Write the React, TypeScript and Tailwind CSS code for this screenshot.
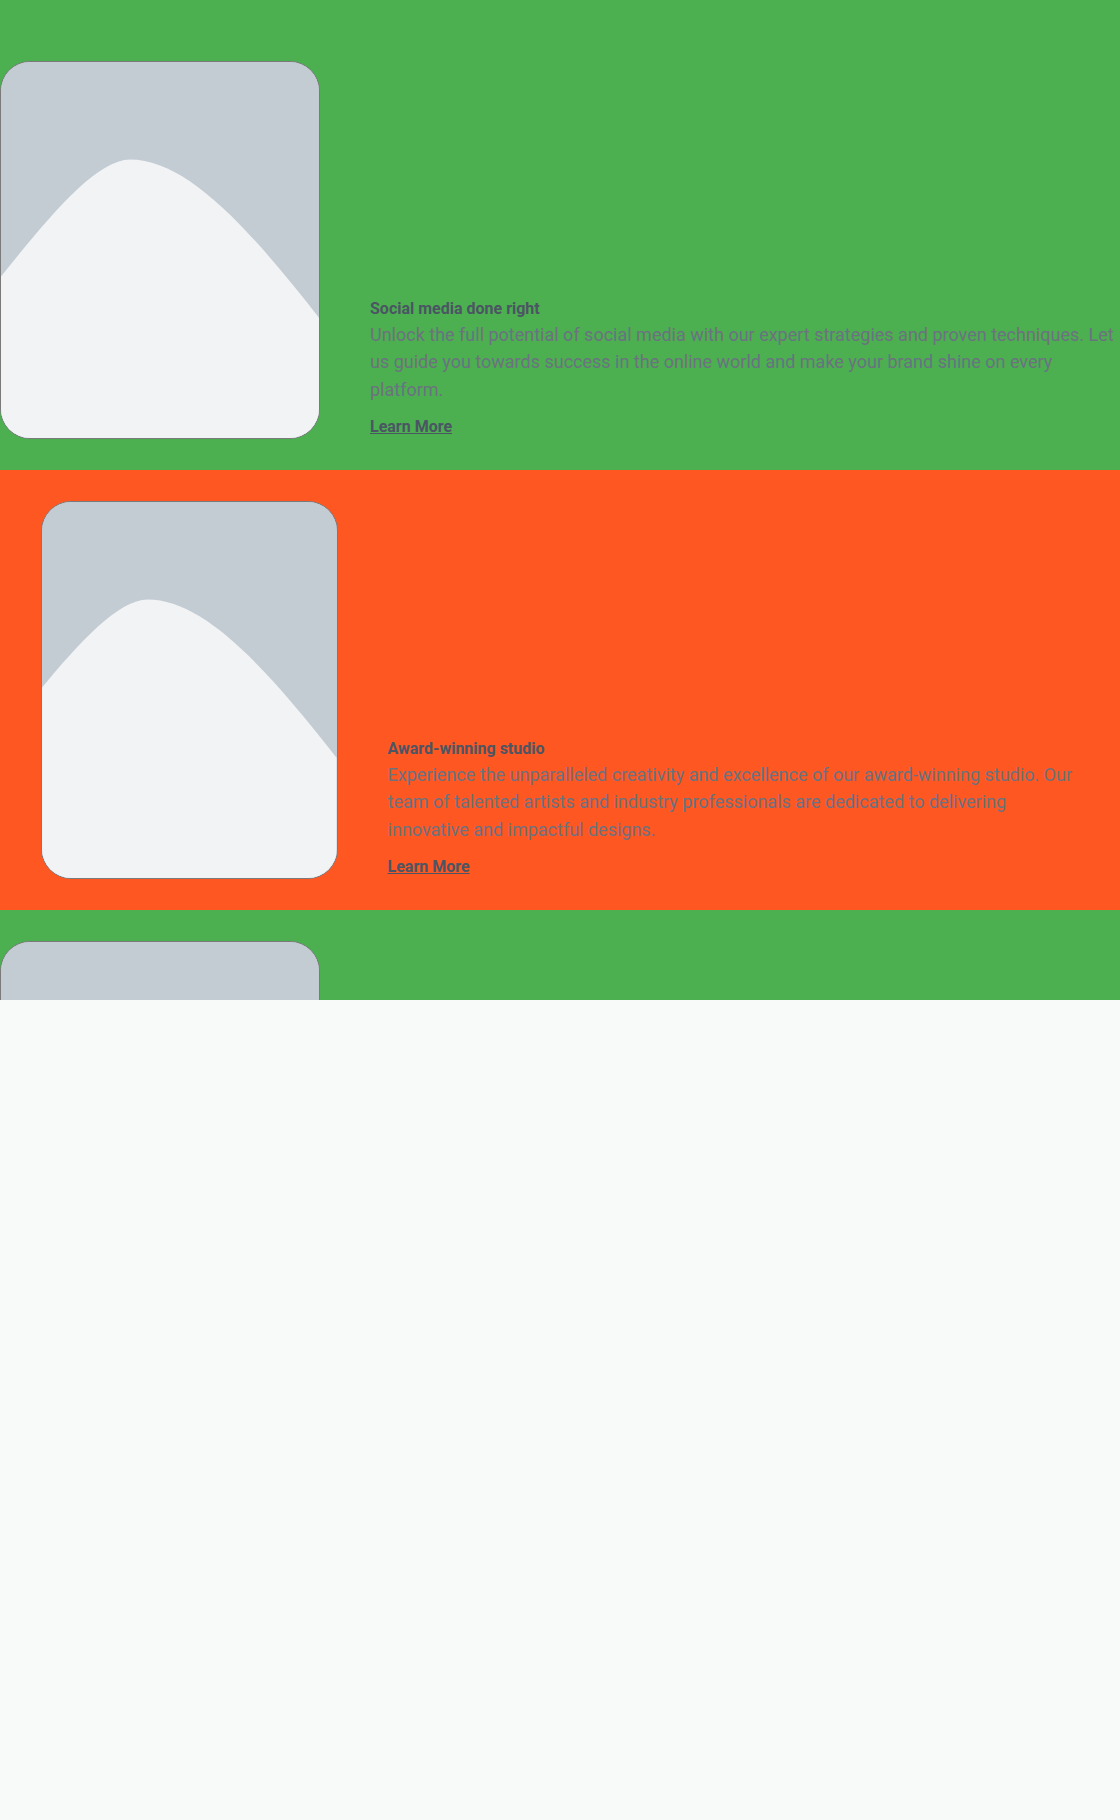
const features = [
  {
    id: "social",
    title: "Social media done right",
    body: "Unlock the full potential of social media with our expert strategies and proven techniques. Let us guide you towards success in the online world and make your brand shine on every platform.",
    tone: "bg-[#4caf50] pt-[61px] pb-[31px]",
  },
  {
    id: "studio",
    title: "Award-winning studio",
    body: "Experience the unparalleled creativity and excellence of our award-winning studio. Our team of talented artists and industry professionals are dedicated to delivering innovative and impactful designs.",
    tone: "bg-[#ff5722] py-[31px] px-[41px]",
  },
];

function Placeholder() {
  return (
    <div className="h-[378px] w-2/7 shrink-0 overflow-hidden rounded-[30px] border border-[#7a7a7a] bg-[#c3cbd3]">
      <svg className="h-full w-full" viewBox="0 0 320 378" preserveAspectRatio="xMaxYMid slice">
        <rect width="320" height="378" fill="#c3cbd3" />
        <path
          d="M0 216 C 45 160, 95 98, 130 98 C 185 98, 245 161, 320 257 V 378 H 0 Z"
          fill="#f1f3f5"
        />
      </svg>
    </div>
  );
}

export default function App() {
  return (
    <div className="min-h-[1820px] bg-[#f8faf9] font-['Roboto',sans-serif]">
      <div className="h-[1000px] overflow-hidden">
        {features.map((item) => (
          <section key={item.id} className={`flex items-end ${item.tone}`}>
            <Placeholder />
            <div className="min-w-0 flex-1 pl-[50px]">
              <h3 className="text-base leading-6 font-bold text-[#4b5563]">{item.title}</h3>
              <p className="text-[18px] leading-[27.3px] text-[#6b7280]">{item.body}</p>
              <a href="#" className="mt-3 inline-block text-base leading-6 font-bold text-[#4b5563] underline">
                Learn More
              </a>
            </div>
          </section>
        ))}
        {/* next row is cut off by the fold */}
        <section className="flex items-end bg-[#4caf50] py-[31px]">
          <Placeholder />
        </section>
      </div>
    </div>
  );
}
